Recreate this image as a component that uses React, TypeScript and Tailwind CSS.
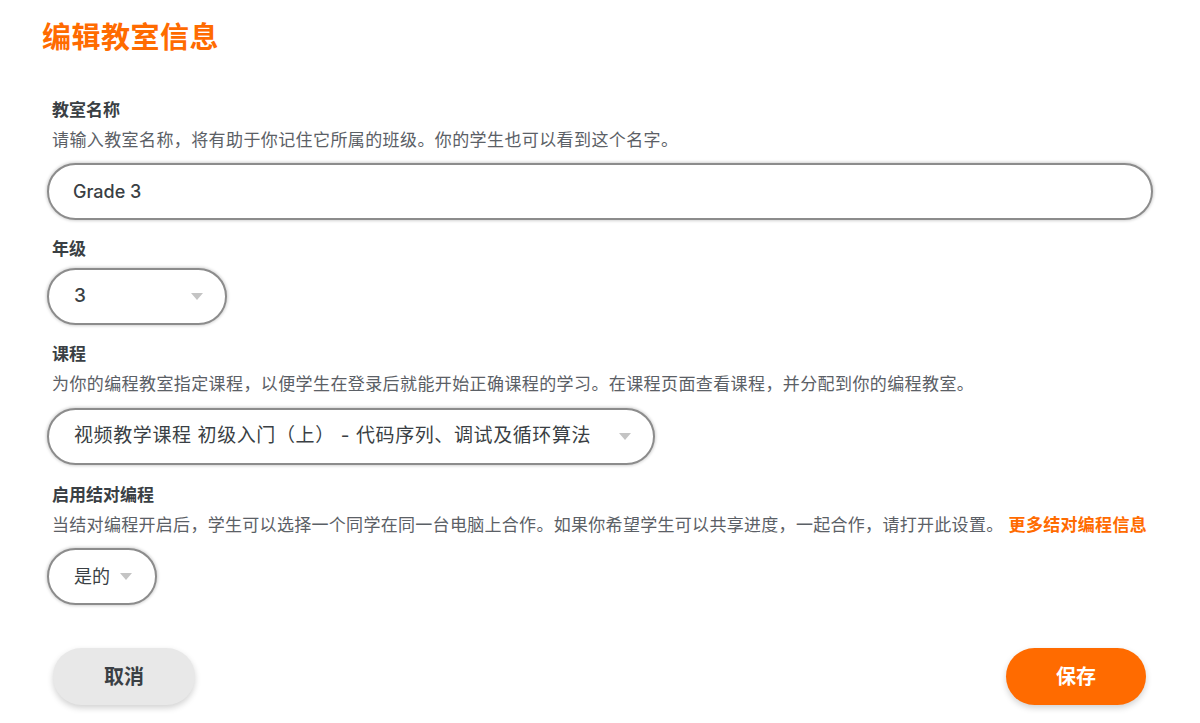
import { useState } from 'react';

const font = { fontFamily: 'Inter, "Noto Sans CJK SC", "Noto Sans", sans-serif' };

function Caret() {
  return (
    <svg width="12" height="7" viewBox="0 0 12 7" className="shrink-0">
      <path d="M0 0 L12 0 L6 7 Z" fill="#c4c4c4" />
    </svg>
  );
}

function PillSelect({ value, className, textClass = '' }: { value: string; className: string; textClass?: string }) {
  return (
    <div
      className={`flex h-[57px] items-center justify-between rounded-full border-2 border-[#8c8c8c] bg-white pl-[25px] shadow-[0_0_3px_1px_rgba(0,0,0,0.18)] ${className}`}
    >
      <span className={`text-[19px] tracking-[0.6px] text-[#3a3f44] ${textClass}`}>{value}</span>
      <Caret />
    </div>
  );
}

export default function App() {
  const [name, setName] = useState('Grade 3');

  return (
    <div className="min-h-[723px] bg-white px-[47px] pt-[18px]" style={font}>
      <h1 className="-ml-[5px] text-[29px] font-bold leading-[40px] tracking-[0.5px] text-[#ff6b00]">编辑教室信息</h1>

      {/* 教室名称 */}
      <div className="mt-[37px]">
        <div className="pl-[5px] text-[17px] font-bold leading-[30px] text-[#3a3f44]">教室名称</div>
        <p className="pl-[5px] text-[17px] leading-[30px] tracking-[0.4px] text-[#5b6066]">
          请输入教室名称，将有助于你记住它所属的班级。你的学生也可以看到这个名字。
        </p>
        <input
          value={name}
          onChange={(e) => setName(e.target.value)}
          className="mt-[8px] block h-[57px] w-full rounded-full border-2 border-[#8c8c8c] bg-white px-[24px] text-[18px] font-medium text-[#3a3f44] shadow-[0_0_3px_1px_rgba(0,0,0,0.18)] outline-none"
        />
      </div>

      {/* 年级 */}
      <div className="mt-[14px]">
        <div className="pl-[5px] text-[17px] font-bold leading-[30px] text-[#3a3f44]">年级</div>
        <PillSelect value="3" className="mt-[4px] w-[180px] pr-[22px]" textClass="font-medium" />
      </div>

      {/* 课程 */}
      <div className="mt-[14px]">
        <div className="pl-[5px] text-[17px] font-bold leading-[30px] text-[#3a3f44]">课程</div>
        <p className="pl-[5px] text-[17px] leading-[30px] tracking-[0.4px] text-[#5b6066]">
          为你的编程教室指定课程，以便学生在登录后就能开始正确课程的学习。在课程页面查看课程，并分配到你的编程教室。
        </p>
        <PillSelect
          value="视频教学课程 初级入门（上） - 代码序列、调试及循环算法"
          className="mt-[9px] w-[608px] pr-[22px]"
        />
      </div>

      {/* 启用结对编程 */}
      <div className="mt-[15px]">
        <div className="pl-[5px] text-[17px] font-bold leading-[30px] text-[#3a3f44]">启用结对编程</div>
        <p className="whitespace-nowrap pl-[5px] text-[17px] leading-[30px] tracking-[0.3px] text-[#5b6066]">
          当结对编程开启后，学生可以选择一个同学在同一台电脑上合作。如果你希望学生可以共享进度，一起合作，请打开此设置。{' '}
          <a className="font-bold text-[#ff6b00]">更多结对编程信息</a>
        </p>
        <div className="mt-[8px] flex h-[57px] w-[110px] items-center gap-[10px] rounded-full border-2 border-[#8c8c8c] bg-white pl-[25px] shadow-[0_0_3px_1px_rgba(0,0,0,0.18)]">
          <span className="text-[18px] text-[#3a3f44]">是的</span>
          <Caret />
        </div>
      </div>

      <div className="mt-[43px] flex items-center justify-between pl-[6px] pr-[7px]">
        <button className="h-[57px] w-[142px] rounded-full bg-[#e8e8e8] text-[20px] font-bold text-[#3a3f44] shadow-[0_3px_6px_rgba(0,0,0,0.18)]">
          取消
        </button>
        <button className="h-[57px] w-[140px] rounded-full bg-[#ff6b00] text-[20px] font-bold text-white shadow-[0_3px_6px_rgba(0,0,0,0.18)]">
          保存
        </button>
      </div>
    </div>
  );
}
